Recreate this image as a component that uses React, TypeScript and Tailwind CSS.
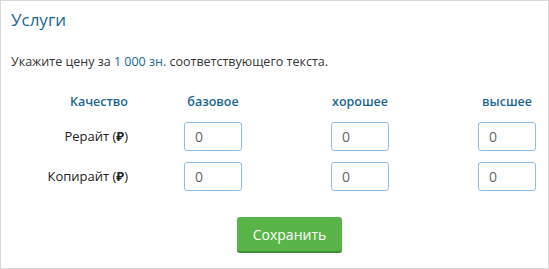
import React from 'react';

// колонки качества
const levels = ['базовое', 'хорошее', 'высшее'];

const rows = [
  { id: 'rewrite', label: 'Рерайт' },
  { id: 'copywrite', label: 'Копирайт' },
];

const PriceInput = () => (
  <input
    type="text"
    defaultValue="0"
    className="w-[58px] h-[29px] rounded-[3px] border border-[#8dbde0] px-[10px] text-[14px] text-[#666] outline-none"
  />
);

export default function App() {
  return (
    <div
      className="w-[549px] h-[269px] border border-[#d9d9d9] bg-white px-[10px] pt-[7px]"
      style={{ fontFamily: '"Open Sans", "Noto Sans", sans-serif' }}
    >
      <h2 className="text-[17px] leading-[24px] text-[#1b6790]">Услуги</h2>

      <p className="mt-[21px] text-[12.5px] leading-[18px] text-[#333]">
        Укажите цену за <span className="text-[#1b6790]">1 000 зн.</span> соответствующего текста.
      </p>

      {/* таблица цен */}
      <div className="mt-[22px] grid grid-cols-[117px_114px_147px_147px] grid-rows-[18px_29px_29px] gap-y-[11px] items-center">
        <div className="text-right text-[12.5px] font-semibold text-[#1b6790]">Качество</div>
        {levels.map((lvl) => (
          <div key={lvl} className="justify-self-end w-[58px] flex justify-center">
            <span className="text-[12.5px] font-semibold text-[#1b6790] whitespace-nowrap">{lvl}</span>
          </div>
        ))}

        {rows.map((row) => (
          <React.Fragment key={row.id}>
            <div className="text-right text-[13px] font-medium text-[#222]">
              {row.label} (<span className="font-bold">₽</span>)
            </div>
            {levels.map((lvl) => (
              <div key={lvl} className="justify-self-end">
                <PriceInput />
              </div>
            ))}
          </React.Fragment>
        ))}
      </div>

      <div className="mt-[26px] pl-[226px]">
        <button className="w-[105px] h-[36px] rounded-[3px] bg-[#5ab548] border-b-2 border-[#3d8f33] text-white text-[14px]">
          Сохранить
        </button>
      </div>
    </div>
  );
}
